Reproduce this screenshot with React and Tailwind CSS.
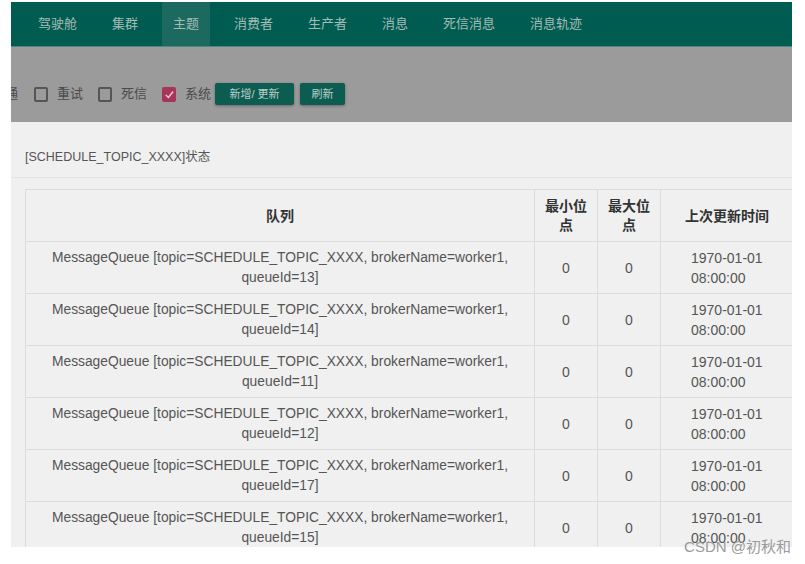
import React from 'react';

const navItems = ['驾驶舱', '集群', '主题', '消费者', '生产者', '消息', '死信消息', '消息轨迹'];

const rows = [13, 14, 11, 12, 17, 15];

const font = { fontFamily: '"Liberation Sans", "Noto Sans CJK SC", sans-serif' };

const Box = ({ checked }) =>
    checked ? (
        <span className="block w-[14px] h-[15px] rounded-[2px] bg-[#a8345a] flex items-center justify-center">
            <svg width="11" height="11" viewBox="0 0 12 12" fill="none" stroke="#e9cfd7" strokeWidth="1.6">
                <path d="M2 6.5 L4.8 9.2 L10 2.8" />
            </svg>
        </span>
    ) : (
        <span className="block w-[14px] h-[15px] rounded-[2px] border-2 border-[#555]" />
    );

const App = () => {
    return (
        <div className="w-[805px] h-[564px] bg-white pt-[2px] pl-[11px] overflow-hidden relative" style={font}>
            <div className="w-[781px] h-[545px] overflow-hidden flex flex-col">
                <div className="h-[45px] shrink-0 bg-[#005c50] border-b border-[#4d8a82] flex items-stretch pl-[16px]">
                    {navItems.map((n) => (
                        <div
                            key={n}
                            className={`px-[11px] mr-[13px] flex items-center text-[13px] text-[#a3bbb6] ${n === '主题' ? 'bg-[#1c6a5f]' : ''}`}
                        >
                            {n}
                        </div>
                    ))}
                </div>
                <div className="h-[75px] shrink-0 bg-[#9b9b9b] flex items-end pb-[17px] text-[13px] text-[#4a4a4a]">
                    <div className="flex items-center h-[22px]">
                        <span className="w-[7px] overflow-hidden whitespace-nowrap flex justify-end">
                            <span>通</span>
                        </span>
                        <span className="ml-[16px]"><Box /></span>
                        <span className="ml-[9px]">重试</span>
                        <span className="ml-[15px]"><Box /></span>
                        <span className="ml-[9px]">死信</span>
                        <span className="ml-[15px]"><Box checked /></span>
                        <span className="ml-[9px]">系统</span>
                        <span className="ml-[4px] w-[79px] h-[22px] bg-[#0d5c52] rounded-[2px] shadow-[0_1px_3px_rgba(0,0,0,0.35)] flex items-center justify-center text-[11px] text-[#b9cfca]">
                            新增/ 更新
                        </span>
                        <span className="ml-[6px] w-[45px] h-[22px] bg-[#0d5c52] rounded-[2px] shadow-[0_1px_3px_rgba(0,0,0,0.35)] flex items-center justify-center text-[11px] text-[#b9cfca]">
                            刷新
                        </span>
                    </div>
                </div>
                <div className="flex-1 bg-[#f0f0f0] overflow-hidden">
                    <div className="h-[56px] border-b border-[#e4e4e4] flex items-center pl-[14px] pt-[15px] text-[12.5px] text-[#555]">
                        [SCHEDULE_TOPIC_XXXX]状态
                    </div>
                    <div className="pl-[14px] pt-[11px]">
                        <table className="table-fixed w-[780px] border-collapse text-[14px] text-[#555] leading-[20px]">
                            <colgroup>
                                <col className="w-[509px]" />
                                <col className="w-[63px]" />
                                <col className="w-[63px]" />
                                <col className="w-[145px]" />
                            </colgroup>
                            <thead>
                                <tr className="h-[52px]">
                                    <th className="border border-[#dcdcdc] font-bold text-[#333] px-[8px]">队列</th>
                                    <th className="border border-[#dcdcdc] font-bold text-[#333] px-[8px] leading-[19px]">最小位点</th>
                                    <th className="border border-[#dcdcdc] font-bold text-[#333] px-[8px] leading-[19px]">最大位点</th>
                                    <th className="border border-[#dcdcdc] font-bold text-[#333] px-[8px] text-left pl-[24px]">上次更新时间</th>
                                </tr>
                            </thead>
                            <tbody>
                                {rows.map((q) => (
                                    <tr key={q} className="h-[52px]">
                                        <td className="border border-[#dcdcdc] text-center px-[8px] text-[13.8px]">
                                            MessageQueue [topic=SCHEDULE_TOPIC_XXXX, brokerName=worker1, queueId={q}]
                                        </td>
                                        <td className="border border-[#dcdcdc] text-center">0</td>
                                        <td className="border border-[#dcdcdc] text-center">0</td>
                                        <td className="border border-[#dcdcdc] text-left pl-[30px]">
                                            1970-01-01
                                            <br />
                                            08:00:00
                                        </td>
                                    </tr>
                                ))}
                            </tbody>
                        </table>
                    </div>
                </div>
            </div>
            <div className="absolute right-[14px] bottom-[8px] text-[15px] leading-[18px] text-[#9a9a9a]">CSDN @初秋和</div>
        </div>
    );
};

export default App;
